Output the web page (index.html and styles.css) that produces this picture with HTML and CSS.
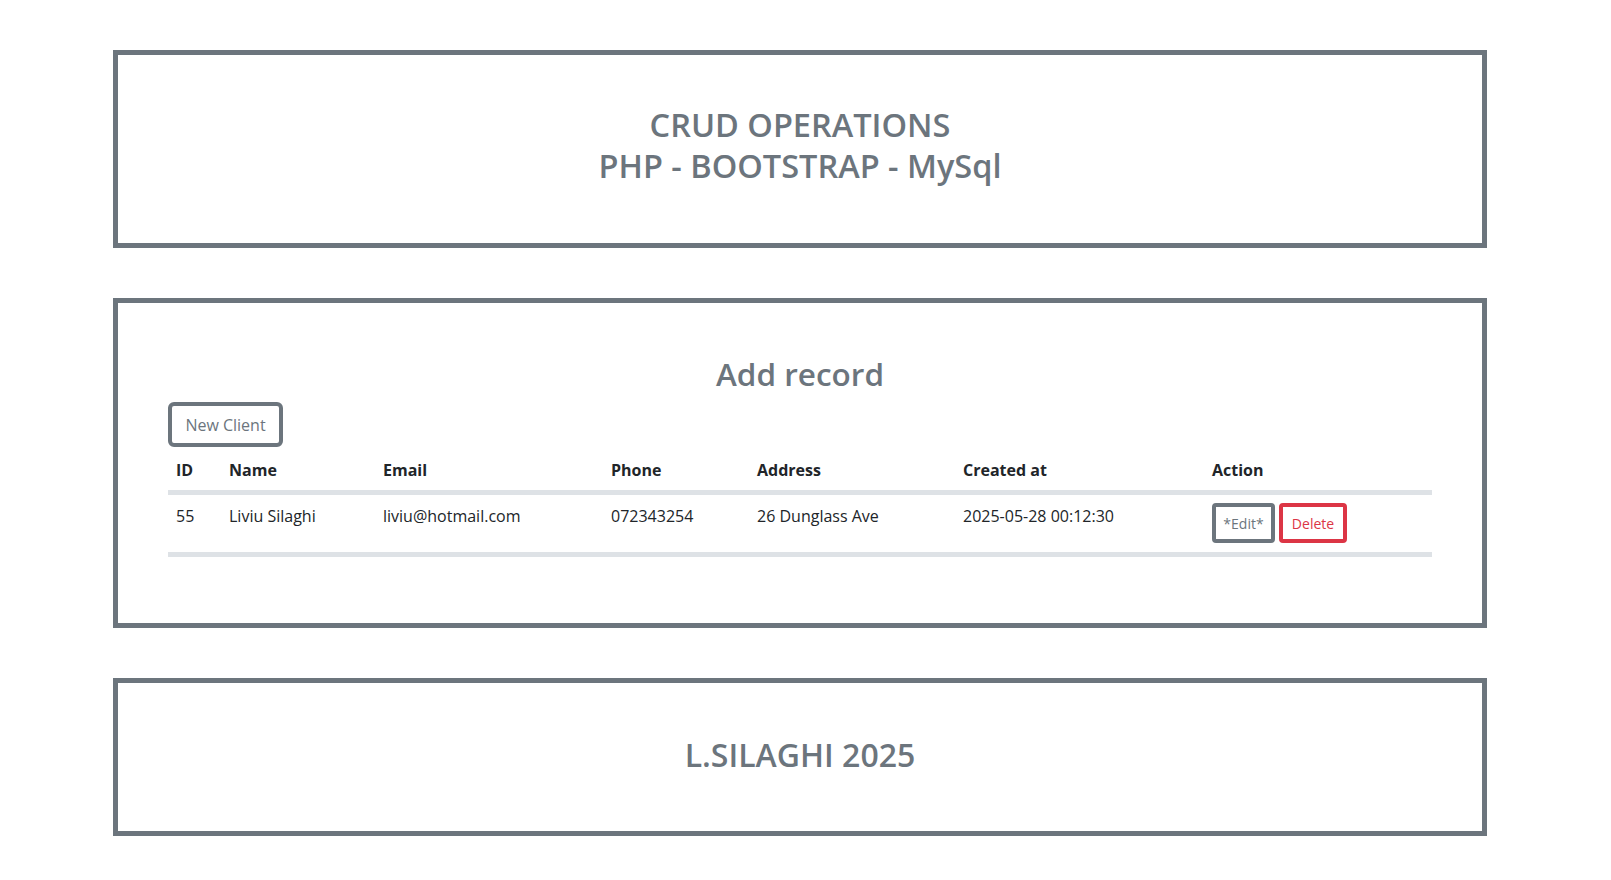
FILE: index.html
```html
<!DOCTYPE html>
<html lang="en">
<head>
<meta charset="utf-8">
<title>CRUD OPERATIONS</title>
<link rel="stylesheet" href="styles.css">
</head>
<body>
<div class="page">
  <header class="box box-header">
    <h1 class="title">CRUD OPERATIONS<br>PHP - BOOTSTRAP - MySql</h1>
  </header>

  <main class="box box-main">
    <h2 class="section-title">Add record</h2>
    <button class="btn btn-new">New Client</button>
    <table class="records">
      <colgroup>
        <col class="c-id"><col class="c-name"><col class="c-email"><col class="c-phone"><col class="c-address"><col class="c-created"><col class="c-action">
      </colgroup>
      <thead>
        <tr>
          <th>ID</th><th>Name</th><th>Email</th><th>Phone</th><th>Address</th><th>Created at</th><th>Action</th>
        </tr>
      </thead>
      <tbody>
        <tr>
          <td>55</td>
          <td>Liviu Silaghi</td>
          <td>liviu@hotmail.com</td>
          <td>072343254</td>
          <td>26 Dunglass Ave</td>
          <td>2025-05-28 00:12:30</td>
          <td class="action-cell"><div class="actions"><button class="btn btn-sm btn-edit">*Edit*</button><button class="btn btn-sm btn-delete">Delete</button></div></td>
        </tr>
      </tbody>
    </table>
  </main>

  <footer class="box box-footer">
    <h2 class="footer-title">L.SILAGHI 2025</h2>
  </footer>
</div>
</body>
</html>
```

FILE: styles.css
```css
* { box-sizing: border-box; }

html, body {
  margin: 0;
  padding: 0;
  background: #ffffff;
}

body {
  font-family: "Open Sans", "Noto Sans", sans-serif;
  font-size: 16px;
  line-height: 24px;
  color: #212529;
}

.page {
  width: 1374px;
  margin-left: 113px;
  padding-top: 50px;
  display: flex;
  flex-direction: column;
  gap: 50px;
}

.box {
  border: 5px solid #6c757d;
  background: #ffffff;
}

.box-header {
  padding: 49px 0 57px;
}

.title {
  margin: 0;
  text-align: center;
  font-size: 32.5px;
  line-height: 41px;
  font-weight: 600;
  color: #6c757d;
}

.box-main {
  padding: 51px 50px 66px;
  display: flex;
  flex-direction: column;
  align-items: flex-start;
}

.section-title {
  align-self: stretch;
  margin: 0 0 8px;
  text-align: center;
  font-size: 31.5px;
  line-height: 40px;
  font-weight: 600;
  color: #6c757d;
}

.btn {
  font-family: inherit;
  background: #ffffff;
  cursor: pointer;
  display: inline-flex;
  align-items: center;
  justify-content: center;
  padding: 0;
}

.btn-new {
  width: 115px;
  height: 45px;
  border: 4px solid #6c757d;
  border-radius: 6px;
  color: #6c757d;
  font-size: 16px;
  margin-bottom: 3px;
}

.records {
  width: 100%;
  border-collapse: collapse;
  table-layout: fixed;
}

.c-id { width: 53px; }
.c-name { width: 154px; }
.c-email { width: 228px; }
.c-phone { width: 146px; }
.c-address { width: 206px; }
.c-created { width: 249px; }
.c-action { width: 228px; }

.records th,
.records td {
  text-align: left;
  vertical-align: top;
  color: #212529;
  white-space: nowrap;
}

.records th {
  padding: 8px;
  font-weight: 700;
  border-bottom: 5px solid #dee2e6;
}

.records td {
  padding: 9px 8px 8px;
  font-weight: 400;
  border-bottom: 5px solid #dee2e6;
}

.records td.action-cell {
  padding: 8px 8px 9px;
}

.actions {
  display: flex;
  gap: 4px;
}

.btn-sm {
  height: 40px;
  border-width: 4px;
  border-style: solid;
  border-radius: 4px;
  font-size: 14px;
}

.btn-edit {
  width: 63px;
  border-color: #6c757d;
  color: #6c757d;
}

.btn-delete {
  width: 68px;
  border-color: #dc3545;
  color: #dc3545;
}

.box-footer {
  padding: 51px 0 56px;
}

.footer-title {
  margin: 0;
  text-align: center;
  font-size: 32px;
  line-height: 41px;
  font-weight: 600;
  color: #6c757d;
}
```
